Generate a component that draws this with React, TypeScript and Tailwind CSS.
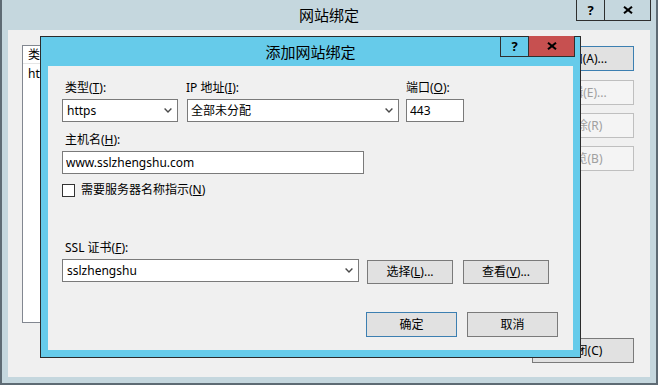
import React from 'react';

const Chevron = () => (
    <svg width="8" height="5" viewBox="0 0 8 5" className="shrink-0">
        <path d="M0.6 0.6 L4 4 L7.4 0.6" stroke="#4a4a4a" strokeWidth="1.4" fill="none" />
    </svg>
);

const CaptionButtons = ({ className, closeBg }: { className: string; closeBg: string }) => (
    <div className={`absolute flex h-[21px] border-b border-[#2f2f2f] ${className}`}>
        <div className="flex w-[28px] items-center justify-center border-l border-[#2f2f2f] text-[13px] font-bold leading-none text-black">?</div>
        <div className={`flex w-[47px] items-center justify-center border-x border-[#2f2f2f] ${closeBg}`}>
            <svg width="10" height="8" viewBox="0 0 10 8">
                <path d="M1 0.8 L9 7.2 M9 0.8 L1 7.2" stroke="#000" strokeWidth="2.1" />
            </svg>
        </div>
    </div>
);

const Btn = ({ children, className = '', variant = 'normal' }: { children: React.ReactNode; className?: string; variant?: 'normal' | 'default' | 'disabled' }) => {
    const look =
        variant === 'default'
            ? 'border-[#3c7fb1] bg-[#e1e1e1] text-black'
            : variant === 'disabled'
              ? 'border-[#bfbfbf] bg-[#f4f4f4] text-[#a0a0a0]'
              : 'border-[#7a7a7a] bg-[#e1e1e1] text-black';
    return <div className={`flex shrink-0 items-center justify-center border text-[12px] ${look} ${className}`}>{children}</div>;
};

const Label = ({ children, className = '' }: { children: React.ReactNode; className?: string }) => (
    <div className={`h-[16px] text-[12px] leading-[16px] text-black ${className}`}>{children}</div>
);

const Field = ({ value, className = '', select = false, pad = 'pl-[3px]' }: { value: string; className?: string; select?: boolean; pad?: string }) => (
    <div className={`flex h-[23px] items-center border border-[#7a7a7a] bg-white pr-[5px] text-[12px] text-black ${pad} ${className}`}>
        <span className="flex-1 truncate">{value}</span>
        {select && <Chevron />}
    </div>
);

const AddBindingDialog = () => (
    <div className="absolute left-[40px] top-[36px] flex h-[322px] w-[541px] flex-col border border-[#2b2b2b] bg-[#66cbea] px-[7px] pb-[7px]">
        <div className="flex h-[29px] items-center justify-center pt-px text-[15px] text-black">添加网站绑定</div>
        <CaptionButtons className="right-[5px] top-[-1px]" closeBg="bg-[#c75050]" />

        <div className="flex flex-1 flex-col bg-[#f0f0f0] pl-[14px] pr-[15px] pt-[14px]">
            {/* type / ip / port */}
            <div className="flex">
                <div className="flex w-[116px] flex-col">
                    <Label className="pl-[3px]">类型(<u>T</u>):</Label>
                    <Field value="https" select pad="pl-[4px]" className="mt-[3px]" />
                </div>
                <div className="ml-[8px] flex w-[213px] flex-col">
                    <Label>IP 地址(<u>I</u>):</Label>
                    <Field value="全部未分配" select className="ml-px mt-[3px]" />
                </div>
                <div className="ml-[7px] flex w-[58px] flex-col">
                    <Label>端口(<u>O</u>):</Label>
                    <Field value="443" className="mt-[3px]" />
                </div>
            </div>

            {/* host name */}
            <Label className="mt-[10px] pl-[3px]">主机名(<u>H</u>):</Label>
            <Field value="www.sslzhengshu.com" className="mt-[3px] h-[22px] w-[302px]" />

            {/* SNI */}
            <div className="mt-[9px] flex h-[14px] items-center">
                <div className="h-[13px] w-[13px] border border-[#333] bg-white" />
                <span className="ml-[6px] text-[12px] leading-[14px] text-black">需要服务器名称指示(<u>N</u>)</span>
            </div>

            {/* certificate */}
            <Label className="mt-[43px] pl-[3px]">SSL 证书(<u>F</u>):</Label>
            <div className="mt-[3px] flex h-[25px] items-start">
                <Field value="sslzhengshu" select pad="pl-[4px]" className="w-[297px]" />
                <Btn className="ml-[8px] mt-px h-[24px] w-[86px]">选择(<u>L</u>)...</Btn>
                <Btn className="ml-[10px] mt-px h-[24px] w-[86px]">查看(<u>V</u>)...</Btn>
            </div>

            <div className="mt-[28px] flex justify-end gap-[10px]">
                <Btn variant="default" className="h-[25px] w-[91px]">确定</Btn>
                <Btn className="h-[25px] w-[91px]">取消</Btn>
            </div>
        </div>
    </div>
);

const App = () => {
    return (
        <div className="relative h-[385px] w-[658px] overflow-hidden font-['Noto_Sans','Noto_Sans_CJK_SC',sans-serif]">
            {/* Site bindings window */}
            <div className="flex h-full flex-col border-x-2 border-b-2 border-[#5e6b74] bg-[#c5d7de] px-[6px] pb-[6px]">
                <div className="flex h-[30px] items-center justify-center pt-px text-[15px] text-black">网站绑定</div>
                <div className="flex flex-1 gap-[12px] bg-[#f0f0f0] pb-[14px] pl-[14px] pr-[16px] pt-[15px]">
                    {/* bindings list */}
                    <div className="flex h-[278px] w-[498px] flex-col border border-[#828790] bg-white text-[12px] text-black">
                        <div className="flex h-[18px] items-center border-b border-[#e5e5e5] pl-[5px]">
                            <span className="w-[60px]">类型</span>
                            <span className="w-[60px]">主机名</span>
                            <span className="w-[40px]">端口</span>
                        </div>
                        <div className="flex h-[20px] items-center pl-[5px]">
                            <span className="w-[60px]">http</span>
                        </div>
                    </div>
                    {/* actions */}
                    <div className="flex w-[102px] flex-col">
                        <Btn variant="default" className="mt-px h-[25px]">添加(A)...</Btn>
                        <Btn variant="disabled" className="mt-[9px] h-[25px]">编辑(E)...</Btn>
                        <Btn variant="disabled" className="mt-[8px] h-[25px]">删除(R)</Btn>
                        <Btn variant="disabled" className="mt-[8px] h-[25px]">浏览(B)</Btn>
                        <Btn className="mt-auto h-[25px]">关闭(C)</Btn>
                    </div>
                </div>
            </div>
            <CaptionButtons className="right-[7px] top-0" closeBg="bg-[#c5d7de]" />

            <AddBindingDialog />
        </div>
    );
};

export default App;
